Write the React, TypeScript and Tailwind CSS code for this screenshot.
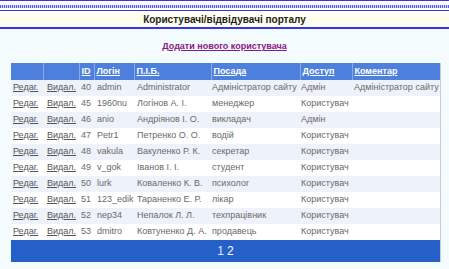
const users = [
  { id: 40, login: "admin", name: "Administrator", post: "Адміністратор сайту", access: "Адмін", note: "Адміністратор сайту" },
  { id: 45, login: "1960nu", name: "Логінов А. І.", post: "менеджер", access: "Користувач", note: "" },
  { id: 46, login: "anio", name: "Андріянов І. О.", post: "викладач", access: "Адмін", note: "" },
  { id: 47, login: "Petr1", name: "Петренко О. О.", post: "водій", access: "Користувач", note: "" },
  { id: 48, login: "vakula", name: "Вакуленко Р. К.", post: "секретар", access: "Користувач", note: "" },
  { id: 49, login: "v_gok", name: "Іванов І. І.", post: "студент", access: "Користувач", note: "" },
  { id: 50, login: "lurk", name: "Коваленко К. В.", post: "психолог", access: "Користувач", note: "" },
  { id: 51, login: "123_edik", name: "Тараненко Е. Р.", post: "лікар", access: "Користувач", note: "" },
  { id: 52, login: "nep34", name: "Непалок Л. Л.", post: "техпрацівник", access: "Користувач", note: "" },
  { id: 53, login: "dmitro", name: "Ковтуненко Д. А.", post: "продавець", access: "Користувач", note: "" },
];

const headers = ["", "", "ID", "Логін", "П.І.Б.", "Посада", "Доступ", "Коментар"];
const widths = ["w-[32px]", "w-[36px]", "w-[15px]", "w-[40px]", "w-[77px]", "w-[89px]", "w-[52px]", "w-[88px]"];

export default function App() {
  return (
    <div className="w-[449px] h-[269px] overflow-hidden bg-[#f3fbfd] font-['Liberation_Sans',Arial,sans-serif]">
      <div className="h-px bg-[#3535f0]" />
      <div className="h-[4px] bg-white" />
      <div className="h-[3px] bg-[repeating-linear-gradient(90deg,#5a5af5_0px,#5a5af5_1px,#d0d0fb_1px,#d0d0fb_2px)]" />
      <div className="h-[2px] bg-white" />
      <div className="h-px bg-[#3535f0]" />
      <div className="h-[16px] bg-[#fffff0] flex items-center justify-center text-[10px] font-bold text-[#222]">
        Користувачі/відвідувачі порталу
      </div>
      <div className="h-[2px] bg-[#3535f0]" />

      <div className="mt-[12px] h-[12px] flex items-center justify-center">
        <a href="#" className="text-[9px] font-bold text-[#8a168a] underline">
          Додати нового користувача
        </a>
      </div>

      <table className="mt-[10px] ml-[11px] w-[429px] table-fixed border-collapse text-[9px] text-[#6a6a6a] shadow-[1px_0_0_#c8ccd4]">
        <thead>
          <tr className="h-[17px] bg-[#4d80dc]">
            {headers.map((h, i) => (
              <th
                key={i}
                className={`${widths[i]} p-0 pl-[2px] text-left font-bold text-white ${i > 0 ? "border-l border-[#8aa9ea]" : ""}`}
              >
                {h ? <a href="#" className="underline">{h}</a> : null}
              </th>
            ))}
          </tr>
        </thead>
        <tbody>
          {users.map((u, i) => (
            <tr key={u.id} className={`h-[16px] ${i % 2 === 0 ? "bg-[#eef2fa]" : "bg-white"}`}>
              <td className="p-0 pl-[2px] whitespace-nowrap">
                <a href="#" className="underline text-[#555]">Редаг.</a>
              </td>
              <td className="p-0 pl-[4px] whitespace-nowrap">
                <a href="#" className="underline text-[#555]">Видал.</a>
              </td>
              <td className="p-0 pl-[2px] whitespace-nowrap">{u.id}</td>
              <td className="p-0 pl-[3px] whitespace-nowrap overflow-hidden">{u.login}</td>
              <td className="p-0 pl-[3px] whitespace-nowrap overflow-hidden">{u.name}</td>
              <td className="p-0 pl-[1px] whitespace-nowrap overflow-hidden">{u.post}</td>
              <td className="p-0 pl-[1px] whitespace-nowrap">{u.access}</td>
              <td className="p-0 pl-[2px] whitespace-nowrap overflow-hidden">{u.note}</td>
            </tr>
          ))}
        </tbody>
        <tfoot>
          <tr className="h-[22px] bg-[#2460c8]">
            <td colSpan={8} className="p-0 text-center text-[12px] text-[#dfe9fb]">
              1<a href="#" className="ml-[3px] text-white">2</a>
            </td>
          </tr>
        </tfoot>
      </table>
    </div>
  );
}
